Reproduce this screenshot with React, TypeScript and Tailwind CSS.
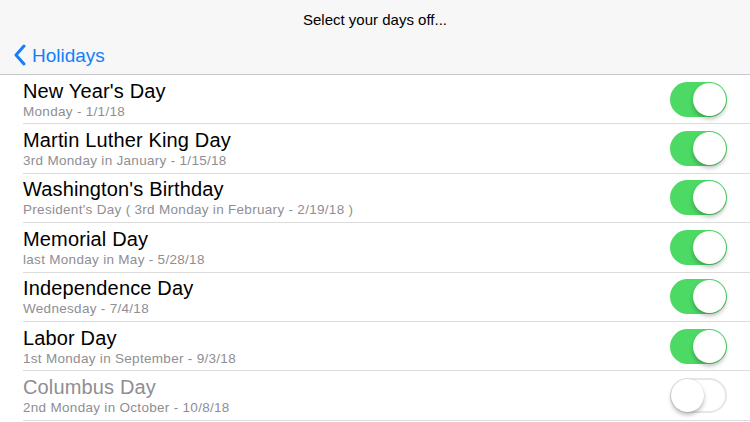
const holidays = [
  { name: "New Year's Day", rule: "Monday - 1/1/18", on: true },
  { name: "Martin Luther King Day", rule: "3rd Monday in January - 1/15/18", on: true },
  { name: "Washington's Birthday", rule: "President's Day ( 3rd Monday in February - 2/19/18 )", on: true },
  { name: "Memorial Day", rule: "last Monday in May - 5/28/18", on: true },
  { name: "Independence Day", rule: "Wednesday - 7/4/18", on: true },
  { name: "Labor Day", rule: "1st Monday in September - 9/3/18", on: true },
  { name: "Columbus Day", rule: "2nd Monday in October - 10/8/18", on: false },
];

const Toggle = ({ on }: { on: boolean }) => (
  <div
    className={
      on
        ? "relative h-[35px] w-[57px] shrink-0 rounded-full bg-[#4cd964]"
        : "relative h-[35px] w-[57px] shrink-0 rounded-full border-2 border-[#e6e6e6] bg-white"
    }
  >
    <div
      className={
        on
          ? "absolute top-[1px] right-[1px] h-[33px] w-[33px] rounded-full bg-white shadow-[0_3px_4px_rgba(0,0,0,0.25)]"
          : "absolute top-[-1px] left-[-1px] h-[33px] w-[33px] rounded-full bg-white shadow-[0_3px_4px_rgba(0,0,0,0.25),0_0_0_0.5px_rgba(0,0,0,0.08)]"
      }
    />
  </div>
);

export default function App() {
  return (
    <div className="h-[422px] w-[750px] overflow-hidden bg-white font-['Liberation_Sans',Arial,sans-serif]">
      <div className="h-[75px] border-b border-[#c8c7cc] bg-[#f7f7f7]">
        <div className="flex h-[40px] items-center justify-center text-[15px] text-black">
          Select your days off...
        </div>
        <div className="flex h-[30px] items-center pl-[13px] text-[#157efb]">
          <svg width="14" height="22" viewBox="0 0 14 22" className="mr-[5px]">
            <path
              d="M11 2 L3 11 L11 20"
              fill="none"
              stroke="#157efb"
              strokeWidth="3"
              strokeLinecap="round"
              strokeLinejoin="round"
            />
          </svg>
          <span className="text-[19px] leading-none">Holidays</span>
        </div>
      </div>
      <div className="pl-[23px]">
        {holidays.map((h) => (
          <div
            key={h.name}
            className="flex h-[49.4px] items-center border-b border-[#dcdcdc] pr-[23px]"
          >
            <div className="flex flex-1 flex-col pt-[2px]">
              <span
                className={
                  h.on
                    ? "text-[20px] leading-[23px] tracking-[0.15px] text-black"
                    : "text-[20px] leading-[23px] tracking-[0.15px] text-[#8e8e93]"
                }
              >
                {h.name}
              </span>
              <span className="text-[13.5px] leading-[18px] tracking-[0.3px] text-[#8e8e93]">
                {h.rule}
              </span>
            </div>
            <Toggle on={h.on} />
          </div>
        ))}
      </div>
    </div>
  );
}
